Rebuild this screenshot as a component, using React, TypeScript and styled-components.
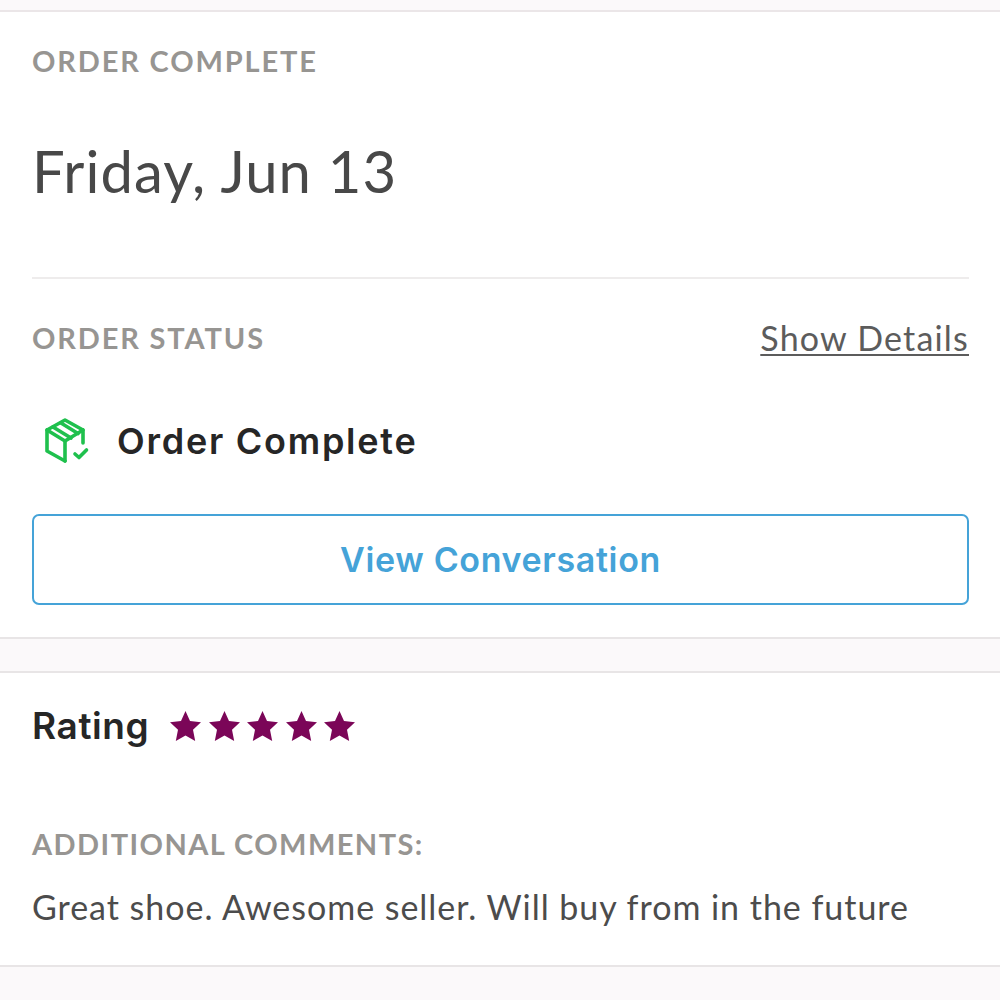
import React from 'react';
import styled, { createGlobalStyle } from 'styled-components';

const GlobalStyle = createGlobalStyle`
  html, body {
    margin: 0;
    padding: 0;
    background: #fff;
    font-family: Lato, "Open Sans", sans-serif;
  }
`;

const Page = styled.div`
  width: 1000px;
  height: 1000px;
  overflow: hidden;
  background: #fff;
`;

const Gap = styled.div<{ $height: number }>`
  height: ${p => p.$height}px;
  box-sizing: border-box;
  background: #fbf9fa;
  border-top: 2px solid #e8e5e6;
  border-bottom: 2px solid #e8e5e6;
`;

const TopGap = styled(Gap)`
  border-top: none;
  border-bottom-color: #ebe6e8;
`;

const BottomGap = styled(Gap)`
  border-bottom: none;
`;

const Section = styled.section<{ $height: number }>`
  height: ${p => p.$height}px;
  box-sizing: border-box;
  padding: 0 31px 0 32px;
`;

const Label = styled.div<{ $spacing?: number }>`
  font-size: 29px;
  line-height: 36px;
  font-weight: 700;
  letter-spacing: ${p => p.$spacing ?? 1.85}px;
  color: #979592;
  white-space: nowrap;
`;

const DateHeading = styled.h1`
  margin: 0;
  padding-top: 61px;
  height: 120px;
  box-sizing: border-box;
  font-size: 58px;
  line-height: 62px;
  font-weight: 400;
  letter-spacing: 1.05px;
  color: #484848;
  white-space: nowrap;
`;

const Divider = styled.hr`
  margin: 0;
  border: none;
  height: 2px;
  background: #eeecec;
`;

const StatusHead = styled.div`
  display: flex;
  justify-content: space-between;
  align-items: center;
  height: 40px;
`;

const DetailsLink = styled.a`
  font-size: 34px;
  line-height: 40px;
  letter-spacing: 1.2px;
  color: #5c5c5c;
  text-decoration: underline;
  text-decoration-thickness: 2px;
  text-underline-offset: 3px;
  white-space: nowrap;
`;

const StatusRow = styled.div`
  display: flex;
  align-items: center;
  gap: 27px;
  height: 50px;
  padding-left: 12px;
`;

const StatusText = styled.span`
  font-family: Inter, Lato, sans-serif;
  font-size: 36px;
  line-height: 44px;
  font-weight: 600;
  letter-spacing: 1.75px;
  color: #262626;
  white-space: nowrap;
`;

const ConversationButton = styled.button`
  display: flex;
  align-items: center;
  justify-content: center;
  width: 100%;
  height: 91px;
  padding: 0;
  background: #fff;
  border: 2px solid #45a3d8;
  border-radius: 7px;
  font-family: Inter, Lato, sans-serif;
  font-size: 34px;
  font-weight: 600;
  letter-spacing: 0.65px;
  color: #45a3d8;
`;

const RatingRow = styled.div`
  display: flex;
  align-items: center;
  gap: 21px;
  height: 50px;
`;

const RatingText = styled.span`
  font-family: Inter, Lato, sans-serif;
  font-size: 37px;
  line-height: 44px;
  font-weight: 600;
  letter-spacing: 0.6px;
  color: #262626;
`;

const Stars = styled.div`
  display: flex;
  gap: 7.5px;
`;

const Comment = styled.p`
  margin: 0;
  font-size: 34px;
  line-height: 44px;
  letter-spacing: 0.97px;
  color: #4c4c4c;
  white-space: nowrap;
`;

const Spacer = styled.div<{ $height: number }>`
  height: ${p => p.$height}px;
`;

const PackageIcon = () => (
  <svg width="46" height="46" viewBox="0 0 46 46" fill="none" stroke="#1fc04d" strokeWidth="3.6" strokeLinejoin="round" strokeLinecap="round">
    <path d="M21 43 L3 33 V12 L21 2 L39 12 V25" />
    <path d="M3 12 L21 23 V43" />
    <path d="M21 23 L39 12" />
    <path d="M9 9 L27 20" />
    <path d="M17 5 L34 15.5" />
    <path d="M31 36 L35 39.5 L42.5 32" />
  </svg>
);

const Star = () => (
  <svg width="31" height="30" viewBox="0 0 31 30">
    <path d="M15.5 0 L20 10 L31 11.3 L23 18.8 L25.2 30 L15.5 24.5 L5.8 30 L8 18.8 L0 11.3 L11 10 Z" fill="#7b0658" />
  </svg>
);

export default function App() {
  return (
    <Page>
      <GlobalStyle />
      <TopGap $height={12} />
      <Section $height={625}>
        <Spacer $height={31} />
        <Label>ORDER COMPLETE</Label>
        <DateHeading>Friday, Jun 13</DateHeading>
        <Spacer $height={78} />
        <Divider />
        <Spacer $height={39} />
        <StatusHead>
          <Label>ORDER STATUS</Label>
          <DetailsLink>Show Details</DetailsLink>
        </StatusHead>
        <Spacer $height={58} />
        <StatusRow>
          <PackageIcon />
          <StatusText>Order Complete</StatusText>
        </StatusRow>
        <Spacer $height={48} />
        <ConversationButton>View Conversation</ConversationButton>
      </Section>
      <Gap $height={36} />
      <Section $height={292}>
        <Spacer $height={28} />
        <RatingRow>
          <RatingText>Rating</RatingText>
          <Stars>
            {[0, 1, 2, 3, 4].map(i => <Star key={i} />)}
          </Stars>
        </RatingRow>
        <Spacer $height={75} />
        <Label $spacing={1.45}>ADDITIONAL COMMENTS:</Label>
        <Spacer $height={23} />
        <Comment>Great shoe. Awesome seller. Will buy from in the future</Comment>
      </Section>
      <BottomGap $height={35} />
    </Page>
  );
}
